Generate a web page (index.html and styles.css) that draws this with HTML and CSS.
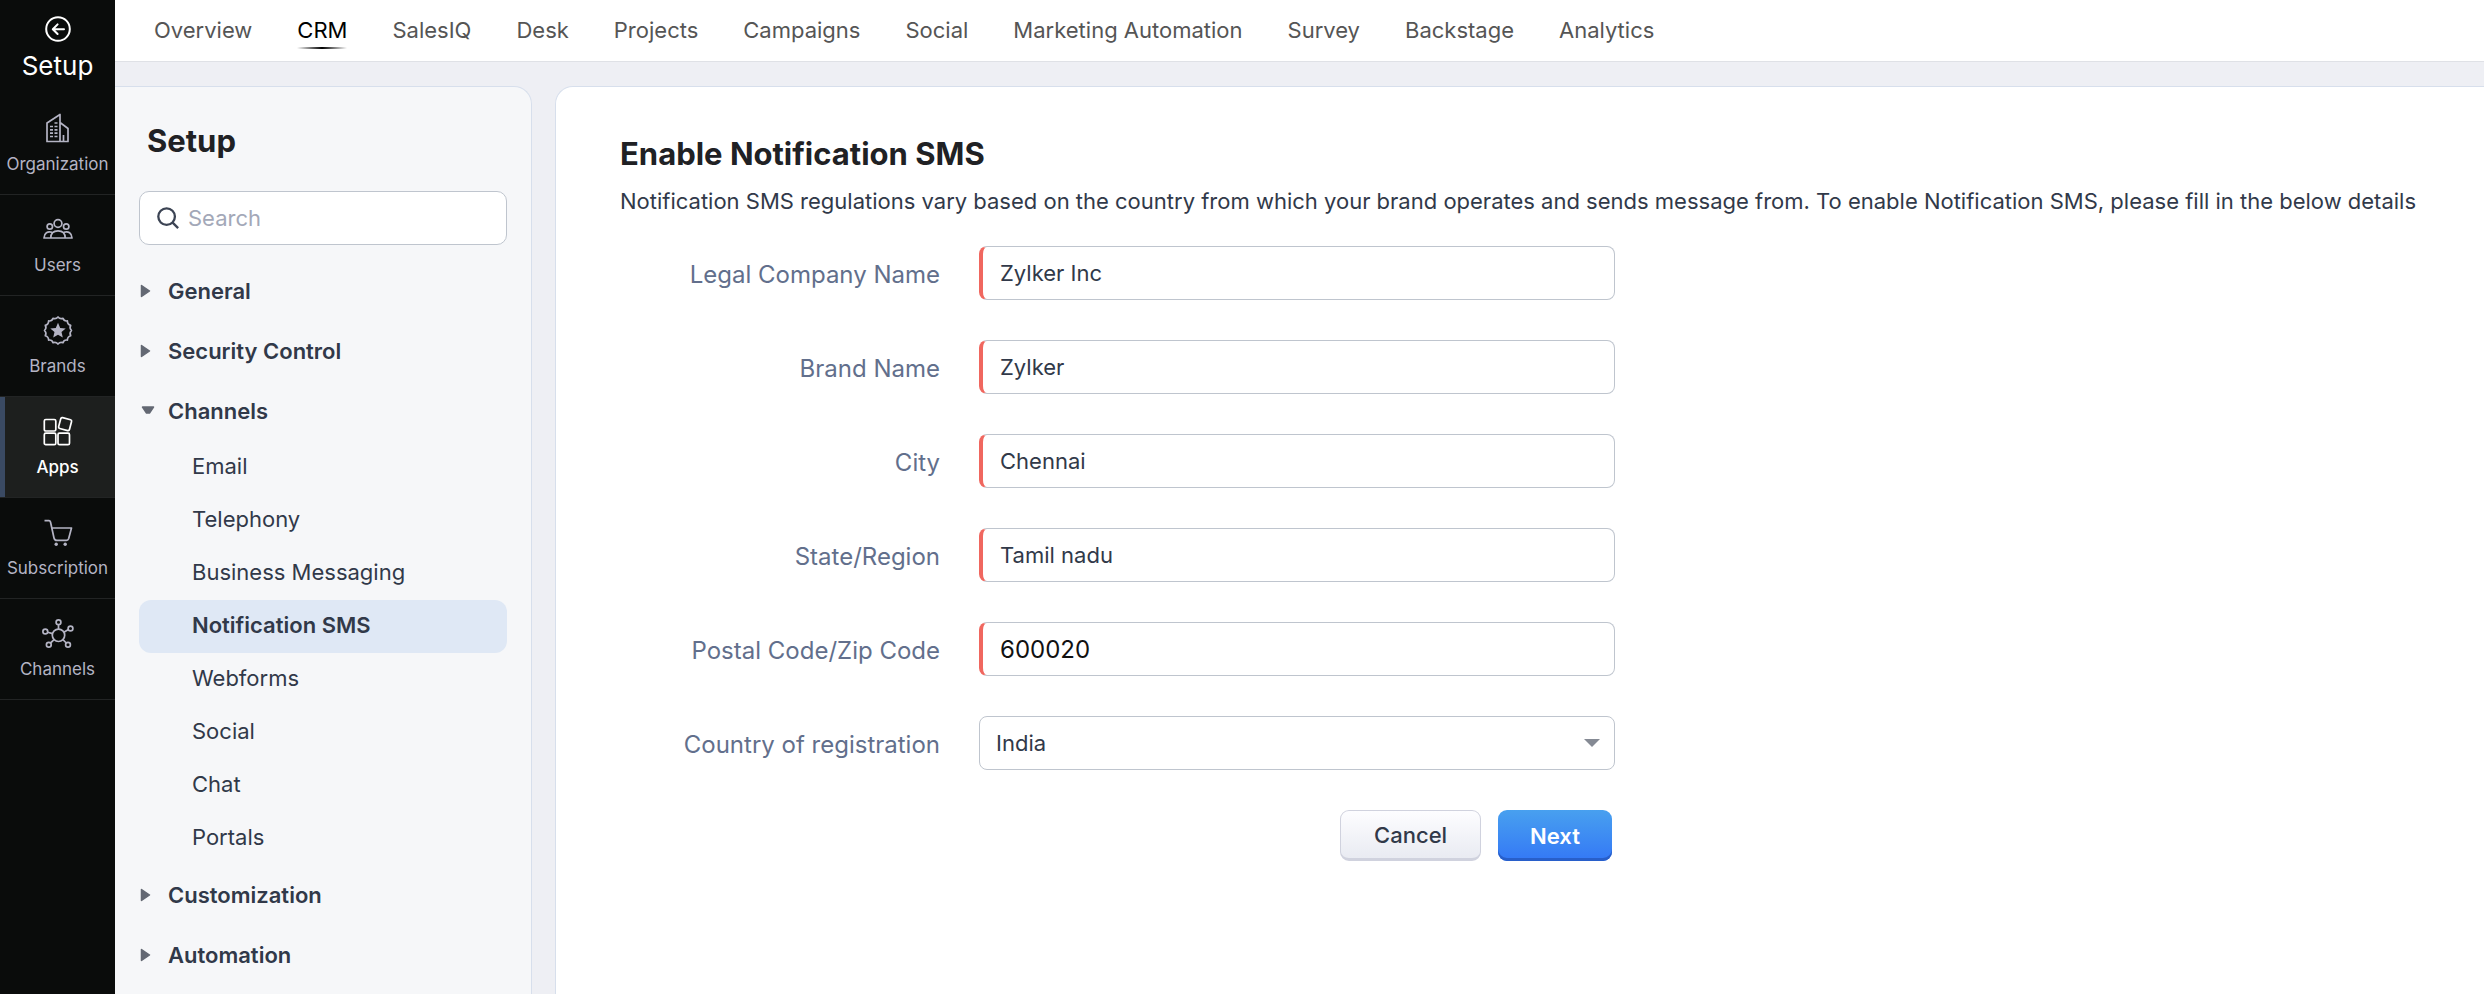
FILE: index.html
```html
<!DOCTYPE html>
<html lang="en">
<head>
<meta charset="utf-8">
<meta name="viewport" content="width=device-width, initial-scale=1">
<title>Setup - Notification SMS</title>
<link rel="stylesheet" href="styles.css">
</head>
<body>
<div class="app">
  <nav class="rail" aria-label="Main">
    <a class="rail-head" href="#">
      <svg class="rail-back" viewBox="0 0 26 26" aria-hidden="true"><circle cx="13" cy="13" r="11.8"/><path d="M19 13.2H8M12.6 8.4L7.8 13.2l4.8 4.8"/></svg>
      <span class="rail-title">Setup</span>
    </a>
    <a class="rail-item" href="#">
      <svg class="rail-icon" viewBox="0.5 0 32 32" aria-hidden="true"><path d="M5.5 29.500V11L18.500 2.500V29.500M18.500 10.500L26.500 16.500V29.500H4.700M22 29V23"/><path class="dash" d="M8.500 14.500H16.500M8.500 17.800H16.500M8.500 21.200H16.500M8.500 24.500H16.500M13 11H16.500"/></svg>
      <span>Organization</span>
    </a>
    <a class="rail-item" href="#">
      <svg class="rail-icon" viewBox="0.5 0 32 32" aria-hidden="true"><circle cx="16.500" cy="10.500" r="3.900"/><circle cx="8.300" cy="13.500" r="2.700"/><circle cx="24.700" cy="13.500" r="2.700"/><path d="M9.300 25C9.300 20 12 17.800 16.500 17.800S23.700 20 23.700 25M10.500 19.300C6 18 2.800 20 2.500 25H30.500C30.200 20 27 18 22.500 19.300"/></svg>
      <span>Users</span>
    </a>
    <a class="rail-item" href="#">
      <svg class="rail-icon" viewBox="0.5 0 32 32" aria-hidden="true"><path d="M16.5 3Q18.700 5.600 21.500 4.300Q22.500 7.500 25.900 6.900Q25.800 10.300 29.200 11.300Q27.600 14 30 16.500Q27.600 18.800 29.200 21.700Q25.800 22.700 25.900 26.100Q22.500 25.500 21.500 28.700Q18.700 27.400 16.500 30Q14.300 27.400 11.500 28.700Q10.500 25.500 7.100 26.100Q7.200 22.700 3.800 21.700Q5.400 18.800 3 16.500Q5.400 14 3.800 11.300Q7.200 10.300 7.100 6.900Q10.500 7.500 11.500 4.300Q14.300 5.600 16.500 3Z"/><path class="solid" d="M16.500 8.800L18.700 13.900L24.200 14.400L20 18.100L21.300 23.600L16.500 20.700L11.700 23.600L13 18.100L8.800 14.400L14.300 13.900Z"/></svg>
      <span>Brands</span>
    </a>
    <a class="rail-item rail-item-active" href="#" aria-current="page">
      <svg class="rail-icon" viewBox="0.5 0 32 32" aria-hidden="true"><rect x="2.800" y="4.500" width="11.500" height="11.500" rx="1.500"/><rect x="2.800" y="18.200" width="11.500" height="11.500" rx="1.500"/><rect x="16.500" y="18.200" width="11.500" height="11.500" rx="1.500"/><rect x="18" y="3.500" width="11.200" height="11.200" rx="1.500" transform="rotate(15 23.600 9.100)"/></svg>
      <span>Apps</span>
    </a>
    <a class="rail-item" href="#">
      <svg class="rail-icon" viewBox="0.5 0 32 32" aria-hidden="true"><path d="M3 4.700H7.500Q8.600 4.700 9 6L12.500 22Q13 24.400 15.300 24.400H25Q26.600 24.400 27.200 22.500L30 12H10.300"/><circle class="solid" cx="14.700" cy="28.200" r="1.700"/><circle class="solid" cx="23.700" cy="28.200" r="1.700"/></svg>
      <span>Subscription</span>
    </a>
    <a class="rail-item" href="#">
      <svg class="rail-icon" viewBox="0.5 0 32 32" aria-hidden="true"><circle cx="17" cy="18.300" r="6.200"/><circle cx="17" cy="5.200" r="2.400"/><circle cx="3.800" cy="14.500" r="2.400"/><circle cx="29" cy="11.500" r="2.400"/><circle cx="7.300" cy="27.800" r="2.400"/><circle cx="26.500" cy="27.800" r="2.400"/><path d="M17 7.600V12M6.200 15.200L11 16.600M26.900 12.600L22.400 15.200M9 26L12.600 22.700M24.800 26L21.400 22.700"/></svg>
      <span>Channels</span>
    </a>
  </nav>

  <div class="workspace">
    <header class="topbar">
      <a class="tab" href="#">Overview</a>
      <a class="tab tab-active" href="#" aria-current="page">CRM</a>
      <a class="tab" href="#">SalesIQ</a>
      <a class="tab" href="#">Desk</a>
      <a class="tab" href="#">Projects</a>
      <a class="tab" href="#">Campaigns</a>
      <a class="tab" href="#">Social</a>
      <a class="tab" href="#">Marketing Automation</a>
      <a class="tab" href="#">Survey</a>
      <a class="tab" href="#">Backstage</a>
      <a class="tab" href="#">Analytics</a>
    </header>

    <div class="columns">
      <aside class="sidebar">
        <h2 class="sidebar-title">Setup</h2>
        <label class="search">
          <svg class="search-icon" viewBox="0 0 26 26" aria-hidden="true"><circle cx="11.500" cy="11.500" r="9"/><path d="M18 18l6 6"/></svg>
          <input class="search-input" type="search" placeholder="Search" aria-label="Search">
        </label>
        <nav class="tree" aria-label="Setup">
          <button class="section" type="button" aria-expanded="false"><svg class="caret" viewBox="0 0 14 14" aria-hidden="true"><path d="M2.500 1.500V12.500L10.500 7Z"/></svg>General</button>
          <button class="section" type="button" aria-expanded="false"><svg class="caret" viewBox="0 0 14 14" aria-hidden="true"><path d="M2.500 1.500V12.500L10.500 7Z"/></svg>Security Control</button>
          <button class="section" type="button" aria-expanded="true"><svg class="caret" viewBox="0 0 14 14" aria-hidden="true"><path d="M3.500 3H14.500L10.500 9H7.500Z"/></svg>Channels</button>
          <ul class="links">
            <li><a class="link" href="#">Email</a></li>
            <li><a class="link" href="#">Telephony</a></li>
            <li><a class="link" href="#">Business Messaging</a></li>
            <li><a class="link link-active" href="#" aria-current="page">Notification SMS</a></li>
            <li><a class="link" href="#">Webforms</a></li>
            <li><a class="link" href="#">Social</a></li>
            <li><a class="link" href="#">Chat</a></li>
            <li><a class="link" href="#">Portals</a></li>
          </ul>
          <button class="section" type="button" aria-expanded="false"><svg class="caret" viewBox="0 0 14 14" aria-hidden="true"><path d="M2.500 1.500V12.500L10.500 7Z"/></svg>Customization</button>
          <button class="section" type="button" aria-expanded="false"><svg class="caret" viewBox="0 0 14 14" aria-hidden="true"><path d="M2.500 1.500V12.500L10.500 7Z"/></svg>Automation</button>
        </nav>
      </aside>

      <main class="content">
        <h1 class="title">Enable Notification SMS</h1>
        <p class="intro">Notification SMS regulations vary based on the country from which your brand operates and sends message from. To enable Notification SMS, please fill in the below details</p>
        <form class="form">
          <label class="label" for="company">Legal Company Name</label>
          <input class="field" id="company" type="text" value="Zylker Inc" required>
          <label class="label" for="brand">Brand Name</label>
          <input class="field" id="brand" type="text" value="Zylker" required>
          <label class="label" for="city">City</label>
          <input class="field" id="city" type="text" value="Chennai" required>
          <label class="label" for="state">State/Region</label>
          <input class="field" id="state" type="text" value="Tamil nadu" required>
          <label class="label" for="postal">Postal Code/Zip Code</label>
          <input class="field field-code" id="postal" type="text" value="600020" required>
          <label class="label" for="country">Country of registration</label>
          <div class="select-wrap">
            <select class="select" id="country"><option selected>India</option></select>
            <svg class="select-arrow" viewBox="0 0 16 8" aria-hidden="true"><path d="M0 0H16L8 8Z"/></svg>
          </div>
          <div class="actions">
            <button class="button" type="button">Cancel</button>
            <button class="button button-primary" type="submit">Next</button>
          </div>
        </form>
      </main>
    </div>
  </div>
</div>
</body>
</html>
```

FILE: styles.css
```css
* {
  box-sizing: border-box;
}

body {
  margin: 0;
  background: #eeeff4;
  color: #313949;
  font-family: Inter, "Liberation Sans", sans-serif;
  font-size: 22px;
  line-height: 32px;
}

a {
  color: inherit;
  text-decoration: none;
}

button,
input,
select {
  font: inherit;
  color: inherit;
}

.app {
  display: flex;
  height: 100vh;
  overflow: hidden;
}

/* Left icon rail */
.rail {
  flex: 0 0 115px;
  background: #0a0c0b;
  color: #b4b4c4;
}

.rail-head {
  display: flex;
  flex-direction: column;
  align-items: center;
  gap: 8px;
  height: 94px;
  padding-top: 16px;
  color: #fff;
}

.rail-back {
  width: 26px;
  height: 26px;
  fill: none;
  stroke: currentColor;
  stroke-width: 2;
  stroke-linecap: round;
  stroke-linejoin: round;
}

.rail-title {
  font-size: 26px;
}

.rail-item {
  display: flex;
  flex-direction: column;
  align-items: center;
  gap: 8px;
  height: 101px;
  padding-top: 18px;
  border-bottom: 1px solid #222424;
  font-size: 17px;
  line-height: 24px;
}

.rail-item-active {
  background: #1d1f1e;
  color: #fff;
  font-weight: 500;
  box-shadow: inset 5px 0 #3a4a63;
}

.rail-icon {
  width: 32px;
  height: 32px;
  fill: none;
  stroke: currentColor;
  stroke-width: 1.7;
  stroke-linejoin: round;
}

.rail-icon .dash {
  stroke-dasharray: 3 1.5;
}

.rail-icon .solid {
  fill: currentColor;
  stroke: none;
}

/* Product tabs */
.workspace {
  display: flex;
  flex: 1;
  flex-direction: column;
  min-width: 0;
}

.topbar {
  display: flex;
  gap: 45px;
  height: 62px;
  padding: 14px 39px 0;
  background: #fff;
  border-bottom: 1px solid #dfe1e6;
  color: #555;
  white-space: nowrap;
}

.tab-active {
  height: 35px;
  background: linear-gradient(90deg, transparent, #000 50%, transparent) bottom / 100% 2px no-repeat;
  color: #000;
}

.columns {
  display: flex;
  flex: 1;
  gap: 23px;
  min-height: 0;
  padding-top: 24px;
}

/* Setup menu */
.sidebar {
  flex: 0 0 417px;
  padding: 34px 24px 0;
  background: #f6f7f9;
  border: 1px solid #d7dfec;
  border-width: 1px 1px 0 0;
  border-top-right-radius: 18px;
  overflow: hidden;
}

.sidebar-title {
  margin: 0 8px 30px;
  color: #202124;
  font-size: 31px;
  font-weight: 700;
  line-height: 40px;
}

.search {
  display: flex;
  align-items: center;
  gap: 8px;
  height: 54px;
  padding: 0 16px;
  background: #fff;
  border: 1px solid #bfc5ce;
  border-radius: 10px;
}

.search-icon {
  flex: none;
  width: 24px;
  height: 24px;
  fill: none;
  stroke: #3c4454;
  stroke-width: 2.5;
}

.search-input {
  flex: 1;
  min-width: 0;
  padding: 0;
  background: none;
  border: 0;
}

.search-input::placeholder {
  color: #a3a8b8;
}

.tree {
  padding-top: 16px;
}

.section {
  display: flex;
  align-items: center;
  gap: 15px;
  width: 100%;
  height: 60px;
  padding: 0;
  background: none;
  border: 0;
  font-weight: 600;
}

.caret {
  width: 14px;
  height: 14px;
  fill: #636873;
  stroke: #636873;
  stroke-width: 1.5;
  stroke-linejoin: round;
  overflow: visible;
}

.links {
  margin: 0;
  padding: 0;
  list-style: none;
}

.link {
  display: block;
  height: 53px;
  padding: 9px 53px;
  border-radius: 12px;
}

.link-active {
  background: #dfe8f5;
  font-weight: 600;
}

/* Form page */
.content {
  flex: 1;
  min-width: 0;
  padding: 47px 64px 0;
  background: #fff;
  border: 1px solid #d7dfec;
  border-width: 1px 0 0 1px;
  border-top-left-radius: 18px;
}

.title {
  margin: 0;
  color: #202124;
  font-size: 31px;
  font-weight: 700;
  line-height: 40px;
}

.intro {
  margin: 11px 0 29px;
}

.form {
  display: grid;
  grid-template-columns: 320px 636px;
  column-gap: 39px;
  row-gap: 40px;
  align-items: center;
}

.label {
  padding-top: 4px;
  color: #626f8c;
  font-size: 24px;
  text-align: right;
}

.field,
.select {
  width: 100%;
  height: 54px;
  background: #fff;
  border: 1px solid #bfc5ce;
  border-radius: 8px;
}

.field {
  padding: 0 17px;
  border-left: 4px solid #f0675f;
}

.field-code {
  color: #111;
  font-size: 24px;
}

.select-wrap {
  display: grid;
  align-items: center;
}

.select-wrap > * {
  grid-area: 1 / 1;
}

.select {
  padding: 0 16px;
  appearance: none;
}

.select-arrow {
  justify-self: end;
  width: 16px;
  height: 8px;
  margin-right: 15px;
  fill: #858a94;
  pointer-events: none;
}

.actions {
  display: flex;
  grid-column: 2;
  justify-content: flex-end;
  gap: 17px;
  padding-right: 3px;
}

.button {
  height: 51px;
  padding: 0 33px;
  background: linear-gradient(#fdfdff, #e9ebf2);
  border: 1px solid #d0d2de;
  border-bottom-width: 3px;
  border-radius: 9px;
  font-weight: 500;
}

.button-primary {
  padding: 0 32px;
  background: linear-gradient(#48a0ef, #3478f6);
  border: 0;
  box-shadow: inset 0 -3px #285fca;
  color: #fff;
  font-weight: 600;
}
```
